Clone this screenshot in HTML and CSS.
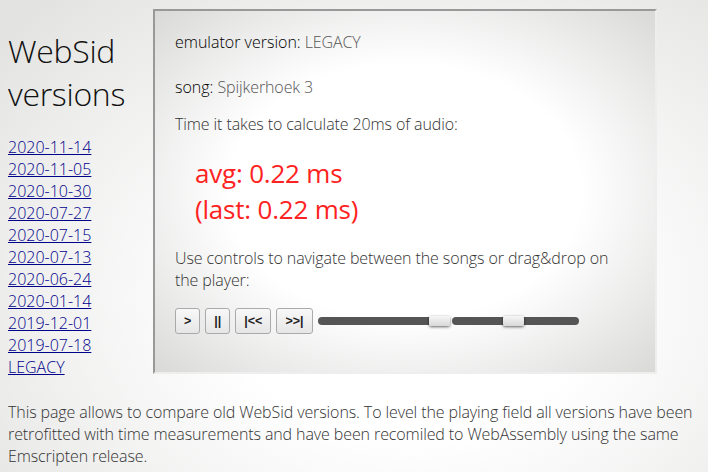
FILE: index.html
```html
<!DOCTYPE html>
<html lang="en">
<head>
    <meta charset="UTF-8">
    <meta name="viewport" content="width=device-width, initial-scale=1.0">
    <title>WebSid versions</title>
    <link rel="stylesheet" href="styles.css">
</head>
<body>

    <div class="page">
        <div class="sidebar">
            <h1>WebSid<br>versions</h1>
            <div class="versions">
                <a href="#">2020-11-14</a>
                <a href="#">2020-11-05</a>
                <a href="#">2020-10-30</a>
                <a href="#">2020-07-27</a>
                <a href="#">2020-07-15</a>
                <a href="#">2020-07-13</a>
                <a href="#">2020-06-24</a>
                <a href="#">2020-01-14</a>
                <a href="#">2019-12-01</a>
                <a href="#">2019-07-18</a>
                <a href="#">LEGACY</a>
            </div>
        </div>

        <div class="player">
            <p class="emu"><span class="label">emulator version:</span> LEGACY</p>
            <p class="song"><span class="label">song:</span> Spijkerhoek 3</p>
            <p>Time it takes to calculate 20ms of audio:</p>
            <div class="timing">
                <div>avg: 0.22 ms</div>
                <div>(last: 0.22 ms)</div>
            </div>
            <p class="hint">Use controls to navigate between the songs or drag&amp;drop on the player:</p>
            <div class="controls">
                <button>&gt;</button>
                <button>||</button>
                <button>|&lt;&lt;</button>
                <button>&gt;&gt;|</button>
                <input class="slider seek" type="range" min="0" max="100" value="100">
                <input class="slider volume" type="range" min="0" max="100" value="49">
            </div>
        </div>
    </div>

    <p class="about">This page allows to compare old WebSid versions. To level the playing field all versions have been retrofitted with time measurements and have been recomiled to WebAssembly using the same Emscripten release.</p>

</body>
</html>
```

FILE: styles.css
```css
html {
    min-height: 100%;
    background: radial-gradient(ellipse 75% 85% at 58% 62%, #ffffff 35%, #e3e4e2 100%);
}
body {
    font-family: 'Open Sans', sans-serif;
    font-size: 16px;
    font-weight: 300;
    letter-spacing: -0.1px;
    color: #333;
    margin: 8px;
}
.page {
    display: flex;
    align-items: flex-start;
}
.sidebar {
    width: 145px;
    flex-shrink: 0;
}
h1 {
    font-size: 32px;
    font-weight: 300;
    letter-spacing: -0.3px;
    color: #111;
    margin: 21px 0;
}
.versions a {
    display: block;
    color: #00008b;
    letter-spacing: 0;
}
.player {
    width: 460px;
    margin-top: 1px;
    padding: 20px 20px 38px 20px;
    border: 2px solid;
    border-color: #999 #eee #eee #999;
    background: radial-gradient(ellipse farthest-corner at 50% 50%, #ffffff 50%, #d9dad8 100%);
}
.player p {
    margin: 0;
}
.label {
    color: #000;
    letter-spacing: 0;
}
.player .emu {
    margin-bottom: 23px;
    color: #555;
}
.player .song {
    margin-bottom: 15px;
    color: #555;
}
.timing {
    margin: 20px 0 20px 20px;
    font-size: 26px;
    font-weight: 400;
    letter-spacing: -0.2px;
    color: #ff2222;
}
.player .hint {
    line-height: 22px;
}
.controls {
    display: flex;
    align-items: center;
    margin-top: 17px;
}
.controls button {
    height: 26px;
    padding: 0 8px;
    margin-right: 5px;
    font-family: 'Liberation Sans', sans-serif;
    font-size: 12.5px;
    font-weight: bold;
    color: #222;
    background: linear-gradient(#f8f8f8, #e6e6e6);
    border: 1px solid #aaa;
    border-radius: 3px;
}
.slider {
    -webkit-appearance: none;
    appearance: none;
    height: 8px;
    margin: 0;
    background: #555;
    border-radius: 4px;
}
.slider::-webkit-slider-thumb {
    -webkit-appearance: none;
    width: 21px;
    height: 10px;
    background: linear-gradient(#f6f6f6, #d8d8d8);
    border-radius: 2px;
    box-shadow: 0 1px 3px rgba(0, 0, 0, 0.6);
}
.seek {
    width: 132px;
}
.volume {
    width: 127px;
    margin-left: 2px;
}
.about {
    margin: 23px 0 0 0;
    line-height: 22px;
}
```
